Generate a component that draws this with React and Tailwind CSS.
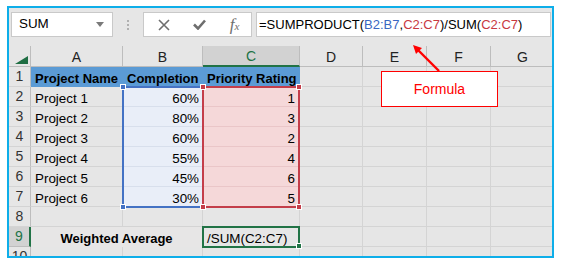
import React from 'react';

const cols = [
  { k: 'A', w: 'w-[92px]' },
  { k: 'B', w: 'w-[80px]' },
  { k: 'C', w: 'w-[97px]' },
  { k: 'D', w: 'w-[63px]' },
  { k: 'E', w: 'w-[64px]' },
  { k: 'F', w: 'w-[64px]' },
  { k: 'G', w: 'w-[64px]' },
];

const projects = [
  ['Project 1', '60%', '1'],
  ['Project 2', '80%', '3'],
  ['Project 3', '60%', '2'],
  ['Project 4', '55%', '4'],
  ['Project 5', '45%', '6'],
  ['Project 6', '30%', '5'],
];

const Cell = ({ w, className = '', children }) => (
  <div className={`${w} shrink-0 h-full flex items-end border-r border-b leading-[15px] whitespace-nowrap overflow-hidden ${className}`}>
    {children}
  </div>
);

const Empty = ({ w }) => <Cell w={w} className="border-r-[#d4d4d4] border-b-[#d4d4d4]" />;

const Row = ({ n, active, children }) => (
  <div className="flex h-[20px]">
    {active ? (
      <div className="w-[22px] shrink-0 flex items-end justify-center pb-[2px] leading-[15px] text-[14px] bg-[#d2d2d2] text-[#217346] border-r-2 border-r-[#217346] border-b border-b-[#bdbdbd]">
        {n}
      </div>
    ) : (
      <div className="w-[22px] shrink-0 flex items-end justify-center pb-[2px] leading-[15px] text-[14px] bg-[#e6e6e6] text-[#333] border-r border-r-[#bdbdbd] border-b border-b-[#d4d4d4]">
        {n}
      </div>
    )}
    {children}
  </div>
);

const Rest = () => (
  <>
    <Empty w="w-[63px]" />
    <Empty w="w-[64px]" />
    <Empty w="w-[64px]" />
    <Empty w="w-[64px]" />
  </>
);

const Handle = ({ className }) => (
  <div className={`absolute w-[6px] h-[6px] border border-white ${className}`} />
);

export default function App() {
  return (
    <div className="relative w-[562px] h-[267px] bg-white pl-[7px] pt-[6px] text-[13.4px] text-black font-['Liberation_Sans',Arial,sans-serif] overflow-hidden">
      <div className="w-[547px] h-[252px] border-2 border-[#0eaee9] bg-[#e6e6e6] overflow-hidden">
        {/* toolbar */}
        <div className="flex items-start h-[38px] pt-[4px] pl-[2px]">
          <div className="w-[102px] h-[25px] bg-white border border-[#c9c9c9] flex items-center justify-between pl-[7px] pr-[8px]">
            <span>SUM</span>
            <svg width="8" height="5" viewBox="0 0 8 5">
              <path d="M0 0 L8 0 L4 5 Z" fill="#7a7a7a" />
            </svg>
          </div>
          <div className="w-[30px] h-[25px] flex flex-col items-center justify-center gap-[2px]">
            <div className="w-[2px] h-[2px] bg-[#b0b0b0]" />
            <div className="w-[2px] h-[2px] bg-[#b0b0b0]" />
            <div className="w-[2px] h-[2px] bg-[#b0b0b0]" />
          </div>
          <div className="w-[109px] h-[25px] bg-white border border-[#c9c9c9] flex items-center">
            <div className="w-[37px] flex justify-center pl-[2px]">
              <svg width="12" height="12" viewBox="0 0 12 12">
                <path d="M1 1 L11 11 M11 1 L1 11" stroke="#6e6e6e" strokeWidth="1.6" />
              </svg>
            </div>
            <div className="w-[37px] flex justify-center">
              <svg width="13" height="11" viewBox="0 0 13 11">
                <path d="M1 5.5 L5 9.5 L12 1.5" stroke="#6e6e6e" strokeWidth="2.6" fill="none" />
              </svg>
            </div>
            <div className="w-[33px] flex justify-center text-[#6e6e6e] font-['Liberation_Serif',serif] italic text-[17px] leading-none">
              f<span className="text-[11px] mt-[5px]">x</span>
            </div>
          </div>
          <div className="flex-1 ml-[4px] mr-[1px] h-[25px] bg-white border border-[#c9c9c9] flex items-center pl-[2px] whitespace-nowrap text-[13px]">
            <span>=SUMPRODUCT(</span>
            <span className="text-[#3a67c2]">B2:B7</span>
            <span>,</span>
            <span className="text-[#c8383f]">C2:C7</span>
            <span>)/SUM(</span>
            <span className="text-[#c8383f]">C2:C7</span>
            <span>)</span>
          </div>
        </div>

        {/* column headers */}
        <div className="flex h-[21px] text-[14px]">
          <div className="w-[22px] shrink-0 h-full flex items-end justify-end pr-[2px] pb-[2px] border-r border-r-[#bdbdbd] border-b border-b-[#bdbdbd]">
            <svg width="13" height="8" viewBox="0 0 13 8">
              <path d="M0 8 L13 0 L13 8 Z" fill="#1f6e43" />
            </svg>
          </div>
          {cols.map((c) =>
            c.k === 'C' ? (
              <div key={c.k} className={`${c.w} shrink-0 h-full flex items-center justify-center pt-[2px] bg-[#d2d2d2] text-[#217346] border-r border-r-[#bdbdbd] border-b-2 border-b-[#217346]`}>
                {c.k}
              </div>
            ) : (
              <div key={c.k} className={`${c.w} shrink-0 h-full flex items-center justify-center pt-[2px] text-[#222] border-r border-r-[#bdbdbd] border-b border-b-[#bdbdbd]`}>
                {c.k}
              </div>
            )
          )}
        </div>

        <Row n="1">
          <Cell w="w-[92px]" className="bg-[#5b9bd5] border-r-[#5b9bd5] border-b-[#5b9bd5] font-bold pl-[4px] text-[13px]">Project Name</Cell>
          <Cell w="w-[80px]" className="bg-[#5b9bd5] border-r-[#5b9bd5] border-b-[#5b9bd5] font-bold pl-[4px] text-[13px]">Completion</Cell>
          <Cell w="w-[97px]" className="bg-[#5b9bd5] border-r-[#5b9bd5] border-b-[#5b9bd5] font-bold pl-[4px] text-[13px]">Priority Rating</Cell>
          <Rest />
        </Row>

        {projects.map((p, i) => (
          <Row key={p[0]} n={i + 2}>
            <Cell w="w-[92px]" className="border-r-[#d4d4d4] border-b-[#d4d4d4] pl-[4px]">{p[0]}</Cell>
            <Cell w="w-[80px]" className="bg-[#e9eef8] border-r-[#e9eef8] border-b-[#d8dfec] justify-end pr-[3px]">{p[1]}</Cell>
            <Cell w="w-[97px]" className="bg-[#f5d8d9] border-r-[#f5d8d9] border-b-[#eac6c8] justify-end pr-[4px]">{p[2]}</Cell>
            <Rest />
          </Row>
        ))}

        <Row n="8">
          <Empty w="w-[92px]" />
          <Empty w="w-[80px]" />
          <Empty w="w-[97px]" />
          <Rest />
        </Row>

        <Row n="9" active>
          <Cell w="w-[172px]" className="bg-[#e7e6e6] border-r-[#e7e6e6] border-b-[#e7e6e6] font-bold justify-center text-[13px]">Weighted Average</Cell>
          <Cell w="w-[97px]" className="border-r-[#d4d4d4] border-b-[#d4d4d4] pl-[4px]">/SUM(C2:C7)</Cell>
          <Rest />
        </Row>

        <Row n="10">
          <Empty w="w-[92px]" />
          <Empty w="w-[80px]" />
          <Empty w="w-[97px]" />
          <Rest />
        </Row>
      </div>

      {/* range highlights */}
      <div className="absolute left-[122px] top-[86px] w-[82px] h-[122px] border-2 border-[#4472c4]" />
      <div className="absolute left-[202px] top-[86px] w-[98px] h-[122px] border-2 border-[#c43e4a]" />
      <div className="absolute left-[202px] top-[226px] w-[98px] h-[22px] border-2 border-[#217346]" />
      <Handle className="left-[120px] top-[84px] bg-[#4472c4]" />
      <Handle className="left-[120px] top-[204px] bg-[#4472c4]" />
      <Handle className="left-[200px] top-[84px] bg-[#c43e4a]" />
      <Handle className="left-[296px] top-[84px] bg-[#c43e4a]" />
      <Handle className="left-[200px] top-[204px] bg-[#c43e4a]" />
      <Handle className="left-[296px] top-[204px] bg-[#c43e4a]" />
      <Handle className="left-[296px] top-[243px] bg-[#217346]" />

      {/* callout */}
      <svg className="absolute left-[405px] top-[40px]" width="40" height="35" viewBox="405 40 40 35">
        <path d="M439 71 L418 50" stroke="#ff0000" strokeWidth="2.4" />
        <path d="M413 45 L422 48 L416 54 Z" fill="#ff0000" />
      </svg>
      <div className="absolute left-[381px] top-[71px] w-[117px] h-[36px] border border-[#ff0000] bg-white flex items-center justify-center text-[#ff0000] text-[14px]">
        Formula
      </div>
    </div>
  );
}
